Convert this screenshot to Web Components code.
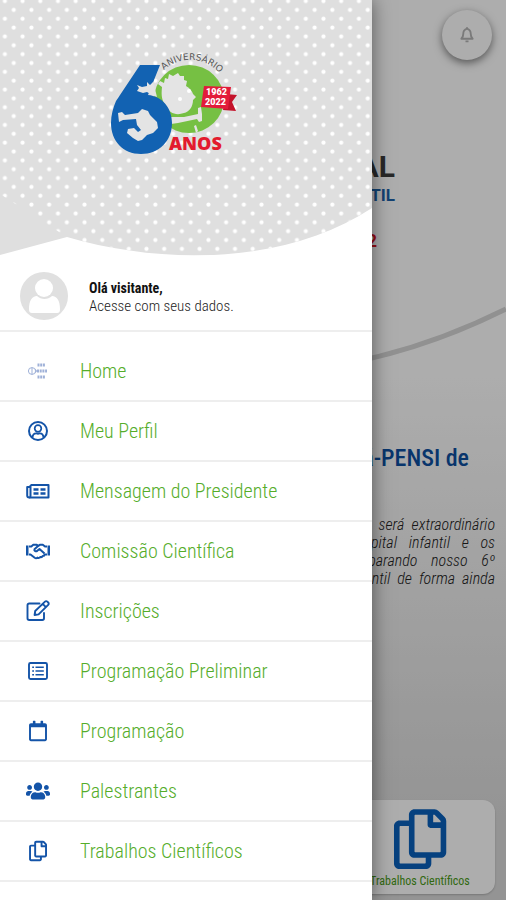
<!DOCTYPE html>
<html lang="pt-BR">
<head>
<meta charset="utf-8">
<meta name="viewport" content="width=device-width, initial-scale=1">
<title>Congresso Sabará-PENSI</title>
<style>
    body {
        margin: 0;
        font-family: "Roboto Condensed", Roboto, sans-serif;
        background: #fff;
    }
</style>
</head>
<body>
<event-app>
    <event-home slot="page"></event-home>
    <side-menu slot="menu">
        <anniversary-banner slot="banner"></anniversary-banner>
        <visitor-info slot="visitor" name="Olá visitante," hint="Acesse com seus dados."></visitor-info>
        <menu-item icon="home">Home</menu-item>
        <menu-item icon="profile">Meu Perfil</menu-item>
        <menu-item icon="news">Mensagem do Presidente</menu-item>
        <menu-item icon="handshake">Comissão Científica</menu-item>
        <menu-item icon="edit">Inscrições</menu-item>
        <menu-item icon="list">Programação Preliminar</menu-item>
        <menu-item icon="calendar">Programação</menu-item>
        <menu-item icon="users">Palestrantes</menu-item>
        <menu-item icon="copy">Trabalhos Científicos</menu-item>
    </side-menu>
</event-app>

<script>
const ICONS = {
    home: `<svg viewBox="0 0 24 24" fill="none" stroke="#9fb1d8" stroke-width="1">
        <ellipse cx="6" cy="12" rx="3.6" ry="3.4"/><path d="M6 8.6v6.8M9 10.5c2 0 2 3 0 3"/>
        <path d="M11.500 6h8M11.500 18h8M11 12h10" stroke-width="3" stroke-dasharray="2 .7"/>
    </svg>`,
    profile: `<svg viewBox="0 0 24 24" fill="none" stroke="currentColor" stroke-width="2">
        <circle cx="12" cy="12" r="9"/><circle cx="12" cy="9.5" r="3.3" stroke-width="1.7"/>
        <path d="M6.5 18.5c.2-3 2-4.2 3.7-4.2 1 .6 2.6.6 3.6 0 1.7 0 3.5 1.2 3.7 4.2" stroke-width="1.8"/>
    </svg>`,
    news: `<svg viewBox="0 0 24 24" fill="none" stroke="currentColor" stroke-width="2" stroke-linejoin="round">
        <path d="M4.500 6h18v12.500H3.200c-1.200 0-2-.8-2-2V8h3.300"/><path d="M4.500 6v10.500c0 1.200-.5 2-1.300 2"/>
        <path d="M7.500 10.500h5M14.500 10.500h5M7.500 14.500h5M14.500 14.500h5" stroke-width="2.600"/>
    </svg>`,
    handshake: `<svg viewBox="0 0 24 24" fill="none" stroke="currentColor" stroke-width="2" stroke-linejoin="round">
        <path d="M0 6.500h2.500v10H0zM21.500 6.500H24v10h-2.500z" fill="currentColor" stroke="none"/>
        <path d="M3 7.500h2.300l2-1.700h3.500l1.500 1 1.500-1h3l2.200 1.700h2M3 15.500h1.500l4.200 3.300c1 .7 2 .5 2.700-.2 1 .6 2.200.3 2.800-.6 1 .3 2 0 2.500-1 1 0 1.800-.7 1.800-1.500H21"/>
        <path d="M12.300 6.800 8.500 10.200c-.7 1.800 1.500 2.800 2.800 1.500l2.200-1.700 5 4.500"/>
    </svg>`,
    edit: `<svg viewBox="0 0 24 24" fill="none" stroke="currentColor" stroke-width="1.900" stroke-linejoin="round">
        <path d="M13.500 4.500H3.200c-1 0-1.700.7-1.700 1.700v13.100c0 1 .7 1.700 1.700 1.700h13.100c1 0 1.700-.7 1.700-1.700V14" stroke-linecap="round"/>
        <path d="M19 2.600c.7-.7 1.600-.7 2.300 0l.9.900c.7.700.7 1.600 0 2.300L12.600 15.400l-4 .6.600-4zM16.700 4.900l3.200 3.200"/>
    </svg>`,
    list: `<svg viewBox="0 0 24 24" fill="none" stroke="currentColor">
        <rect x="3" y="4" width="18" height="16" rx="1.500" stroke-width="1.900"/>
        <path d="M6.200 8.200h1.800M6.200 12h1.800M6.200 15.800h1.800M9.500 8.200h8.300M9.500 12h8.300M9.500 15.800h8.300" stroke-width="1.600"/>
    </svg>`,
    calendar: `<svg viewBox="-76 -45 600 600" fill="currentColor">
        <path d="M400 64h-48V12c0-6.600-5.400-12-12-12h-40c-6.600 0-12 5.400-12 12v52H160V12c0-6.600-5.400-12-12-12h-40c-6.600 0-12 5.400-12 12v52H48C21.500 64 0 85.500 0 112v352c0 26.500 21.500 48 48 48h352c26.500 0 48-21.500 48-48V112c0-26.500-21.500-48-48-48zm-6 400H54c-3.300 0-6-2.700-6-6V160h352v298c0 3.300-2.700 6-6 6z"/>
    </svg>`,
    users: `<svg viewBox="0 -64 640 640" fill="currentColor">
        <path d="M96 224c35.300 0 64-28.700 64-64s-28.700-64-64-64-64 28.700-64 64 28.700 64 64 64zm448 0c35.300 0 64-28.700 64-64s-28.700-64-64-64-64 28.700-64 64 28.700 64 64 64zm32 32h-64c-17.600 0-33.500 7.100-45.100 18.600 40.300 22.100 68.900 62 75.100 109.400h66c17.700 0 32-14.300 32-32v-32c0-35.300-28.700-64-64-64zm-256 0c61.900 0 112-50.100 112-112S381.900 32 320 32 208 82.100 208 144s50.100 112 112 112zm76.800 32h-8.300c-20.800 10-43.900 16-68.500 16s-47.600-6-68.500-16h-8.300C179.600 288 128 339.600 128 403.200V432c0 26.500 21.500 48 48 48h288c26.500 0 48-21.500 48-48v-28.800c0-63.600-51.600-115.200-115.200-115.200zm-223.700-13.400C161.500 263.100 145.600 256 128 256H64c-35.300 0-64 28.700-64 64v32c0 17.700 14.300 32 32 32h65.900c6.300-47.400 34.900-87.300 75.200-109.400z"/>
    </svg>`,
    copy: `<svg viewBox="-45 -45 600 600" fill="currentColor">
        <path transform="translate(32)" d="M433.941 65.941l-51.882-51.882A48 48 0 0 0 348.118 0H176c-26.510 0-48 21.490-48 48v48H48c-26.510 0-48 21.490-48 48v320c0 26.510 21.490 48 48 48h224c26.510 0 48-21.490 48-48v-48h80c26.510 0 48-21.490 48-48V99.882a48 48 0 0 0-14.059-33.941zM266 464H54a6 6 0 0 1-6-6V150a6 6 0 0 1 6-6h74v224c0 26.510 21.490 48 48 48h96v42a6 6 0 0 1-6 6zm128-96H182a6 6 0 0 1-6-6V54a6 6 0 0 1 6-6h106v88c0 13.255 10.745 24 24 24h88v202a6 6 0 0 1-6 6zm6-256h-64V48h9.632c1.591 0 3.117.632 4.243 1.757l48.368 48.368a6 6 0 0 1 1.757 4.243V112z"/>
    </svg>`,
    bell: `<svg viewBox="0 0 24 24" fill="none" stroke="currentColor" stroke-width="2.500" stroke-linejoin="round">
        <path d="M12 3.500c-3 1-5 3.500-5 7 0 3-1 5-2.500 6.500h15C18 15.500 17 13.500 17 10.500c0-3.500-2-6-5-7z"/><path d="M10 20.500h4M12 1.500v2"/>
    </svg>`
};

class EventApp extends HTMLElement {
    constructor() {
        super();
        this.attachShadow({ mode: 'open' });
    }

    connectedCallback() {
        this.shadowRoot.innerHTML = `
            <style>
                :host {
                    display: block;
                    position: relative;
                    height: 100vh;
                    overflow: hidden;
                }
                .backdrop {
                    position: absolute;
                    inset: 0;
                    background: rgba(0, 0, 0, 0.32);
                }
                ::slotted([slot="menu"]) {
                    position: absolute;
                    inset: 0 134px 0 0;
                }
            </style>
            <slot name="page"></slot>
            <div class="backdrop"></div>
            <slot name="menu"></slot>
        `;
    }
}

class EventHome extends HTMLElement {
    constructor() {
        super();
        this.attachShadow({ mode: 'open' });
    }

    connectedCallback() {
        this.shadowRoot.innerHTML = `
            <style>
                :host {
                    display: flex;
                    flex-direction: column;
                    box-sizing: border-box;
                    height: 100%;
                    padding: 10px 11px 6px;
                    background: linear-gradient(#fff 42%, #dadada 92%);
                }
                header {
                    display: flex;
                    justify-content: flex-end;
                    padding-right: 3px;
                }
                button {
                    display: grid;
                    place-items: center;
                    width: 50px;
                    height: 50px;
                    border: 0;
                    border-radius: 50%;
                    background: #fff;
                    color: #b4b4b4;
                    box-shadow: 0 3px 8px rgba(0, 0, 0, 0.5);
                }
                button svg { width: 18px; height: 18px; }
                .brand {
                    width: 284px;
                    margin: 88px auto 0;
                    text-align: right;
                    font-family: Roboto, sans-serif;
                    font-weight: 700;
                }
                .brand p { margin: 0; }
                .name { font-size: 30px; line-height: 38px; color: #3c3c3c; }
                .kind { font-size: 17px; line-height: 18px; color: #1c62a8; }
                .year { padding: 22px 18px 0 0; font-size: 18px; line-height: 30px; color: #e0121e; }
                .curve {
                    display: block;
                    height: 110px;
                    margin: 4px -11px 0;
                }
                h1 {
                    margin: 73px 0 0;
                    padding-right: 26px;
                    text-align: right;
                    font-size: 24px;
                    line-height: 30px;
                    font-weight: 500;
                    color: #0d4fa0;
                }
                .intro {
                    width: 146px;
                    margin: 43px 0 0 auto;
                    font-size: 16px;
                    line-height: 18px;
                    font-weight: 300;
                    font-style: italic;
                    color: #222;
                }
                .intro span {
                    display: block;
                    white-space: nowrap;
                    text-align-last: justify;
                }
                nav {
                    display: flex;
                    justify-content: flex-end;
                    margin-top: auto;
                }
                a {
                    display: flex;
                    flex-direction: column;
                    align-items: center;
                    box-sizing: border-box;
                    width: 31%;
                    padding: 4px 0 6px;
                    border-radius: 12px;
                    background: #fff;
                    box-shadow: 0 1px 2px rgba(0, 0, 0, 0.2);
                    font-size: 12px;
                    line-height: 14px;
                    color: #4b9b18;
                    text-decoration: none;
                    white-space: nowrap;
                }
                a svg { width: 70px; height: 70px; color: #0a60bb; }
            </style>
            <header>
                <button type="button" aria-label="Notificações">${ICONS.bell}</button>
            </header>
            <div class="brand">
                <p class="name">HOSPITAL</p>
                <p class="kind">INFANTIL</p>
                <p class="year">2022</p>
            </div>
            <svg class="curve" viewBox="0 0 506 110" preserveAspectRatio="none">
                <path d="M0 49Q253 175 506 49" fill="none" stroke="#d6d6d6" stroke-width="5"/>
            </svg>
            <h1>Sabará-PENSI de</h1>
            <p class="intro">
                <span>que será extraordinário</span>
                <span>hospital infantil e os</span>
                <span>preparando nosso 6º</span>
                <span>infantil de forma ainda</span>
            </p>
            <nav>
                <a href="#trabalhos">${ICONS.copy}Trabalhos Científicos</a>
            </nav>
        `;
    }
}

class SideMenu extends HTMLElement {
    constructor() {
        super();
        this.attachShadow({ mode: 'open' });
    }

    connectedCallback() {
        this.shadowRoot.innerHTML = `
            <style>
                :host {
                    display: block;
                    background: #fff;
                    box-shadow: 0 0 18px rgba(0, 0, 0, 0.5);
                }
                nav { padding-top: 10px; }
            </style>
            <slot name="banner"></slot>
            <slot name="visitor"></slot>
            <nav><slot></slot></nav>
        `;
    }
}

class AnniversaryBanner extends HTMLElement {
    constructor() {
        super();
        this.attachShadow({ mode: 'open' });
    }

    connectedCallback() {
        this.shadowRoot.innerHTML = `
            <style>
                :host { display: block; }
                svg { display: block; width: 100%; }
                text { font-family: "Open Sans", sans-serif; font-weight: 800; }
                .arc { font-family: "DejaVu Sans", sans-serif; font-weight: 400; }
                .flag { font-family: Roboto, sans-serif; font-weight: 900; }
            </style>
            <svg viewBox="0 0 372 258" role="img" aria-label="60 anos">
                <defs>
                    <pattern id="dots" width="17.700" height="17.700" patternUnits="userSpaceOnUse" patternTransform="translate(.5 -3.500)">
                        <circle cx="4.400" cy="4.600" r="2.100" fill="#fff"/>
                        <circle cx="13.250" cy="13.450" r="2.100" fill="#fff"/>
                    </pattern>
                    <path id="arc" d="M164 70A39 39 0 0 1 228 89"/>
                </defs>
                <path d="M0 0H372V208C290 262 170 267 67 237L0 255z" fill="#dfdfdf"/>
                <path d="M0 0H372V208C290 262 170 267 67 237L0 194z" fill="url(#dots)"/>

                <!-- zero -->
                <ellipse cx="189" cy="99" rx="35" ry="34" fill="#76c043"/>
                <path d="M162 87l-4-3 2-3 4 2 1-5 3 1 1-5 4 2 5-3 2 3 4 0 0 4 3 1-1 5c4 2 6 5 7 8l3 3-3 3c0 7-4 12-9 13-8 3-15 0-18-7-4-5-5-10-4-19z" fill="#e4e4e4"/>
                <path d="M171 117l13 0 14-3 0-6 3-1 1 7 0 7-3 1-2-3-19 4-7 1z" fill="#e4e4e4"/>
                <path d="M194 126l2-1 2 6-2 2z" fill="#e4e4e4"/>
                <circle cx="189" cy="91" r="2" fill="#fff"/>
                <circle cx="180" cy="99" r="2" fill="#fff"/>
                <!-- six -->
                <path d="M140 65h20l-12 30c14 1 24 13 24 28 0 18-13 31-31 31s-30-13-30-31c0-8 2-15 5-22z" fill="#1262b2"/>
                <path d="M137 85l5 2 5-1 0-4 3 3 3-3 2 7 2 8-5-2-5-3-4 1-6-2 2-3z" fill="#e4e4e4"/>
                <path d="M118 113l4-1 3 3 13-2 4-4 6 2 2 4 7 7 1 6-5 5-6 2-5 5-4 1-5-3-6-5 1-4 6-1 4 4 3-2-4-5-1-6-13 1-4 2z" fill="#e4e4e4"/>

                <text class="arc" font-size="9" fill="#555"><textPath href="#arc">ANIVERSÁRIO</textPath></text>
                <path d="M226 94l11 1-5 7 4 9-13-1z" fill="#c4122a"/>
                <path d="M204 86l27 1-3 22-27-2z" fill="#e31b3a"/>
                <text class="flag" x="206" y="95" font-size="9" fill="#fff">1962</text>
                <text class="flag" x="205" y="105" font-size="9" fill="#fff">2022</text>
                <text x="169" y="150" font-size="18" fill="#e31b2e">ANOS</text>
            </svg>
        `;
    }
}

class VisitorInfo extends HTMLElement {
    constructor() {
        super();
        this.attachShadow({ mode: 'open' });
    }

    connectedCallback() {
        this.shadowRoot.innerHTML = `
            <style>
                :host {
                    display: flex;
                    align-items: center;
                    gap: 20px;
                    padding: 14px 20px 9px;
                    border-bottom: 2px solid #eee;
                    font-size: 15px;
                    line-height: 18px;
                    font-weight: 300;
                    color: #222;
                }
                svg { width: 49px; height: 49px; }
                p { margin: 0; }
                strong { display: block; font-size: 14px; font-weight: 700; color: #111; }
            </style>
            <svg viewBox="0 0 49 49" aria-hidden="true">
                <circle cx="24" cy="24" r="24" fill="#e0e0e0"/>
                <circle cx="24" cy="16" r="9" fill="#fff"/>
                <path d="M9 37c0-8 3-13 8-13 4 4 11 4 15 0 5 0 8 5 8 13 0 3-1 4-3 4H12c-2 0-3-1-3-4z" fill="#fff"/>
            </svg>
            <p><strong>${this.getAttribute('name')}</strong>${this.getAttribute('hint')}</p>
        `;
    }
}

class MenuItem extends HTMLElement {
    constructor() {
        super();
        this.attachShadow({ mode: 'open' });
    }

    connectedCallback() {
        this.shadowRoot.innerHTML = `
            <style>
                :host { display: block; }
                a {
                    display: flex;
                    align-items: center;
                    gap: 30px;
                    height: 58px;
                    padding: 0 26px;
                    border-bottom: 2px solid #eee;
                    font-size: 20px;
                    font-weight: 300;
                    color: #55ad2a;
                    text-decoration: none;
                }
                svg { flex: none; width: 24px; height: 24px; color: #1454a8; }
            </style>
            <a href="#${this.getAttribute('icon')}">${ICONS[this.getAttribute('icon')]}<slot></slot></a>
        `;
    }
}

customElements.define('event-app', EventApp);
customElements.define('event-home', EventHome);
customElements.define('side-menu', SideMenu);
customElements.define('anniversary-banner', AnniversaryBanner);
customElements.define('visitor-info', VisitorInfo);
customElements.define('menu-item', MenuItem);
</script>
</body>
</html>
